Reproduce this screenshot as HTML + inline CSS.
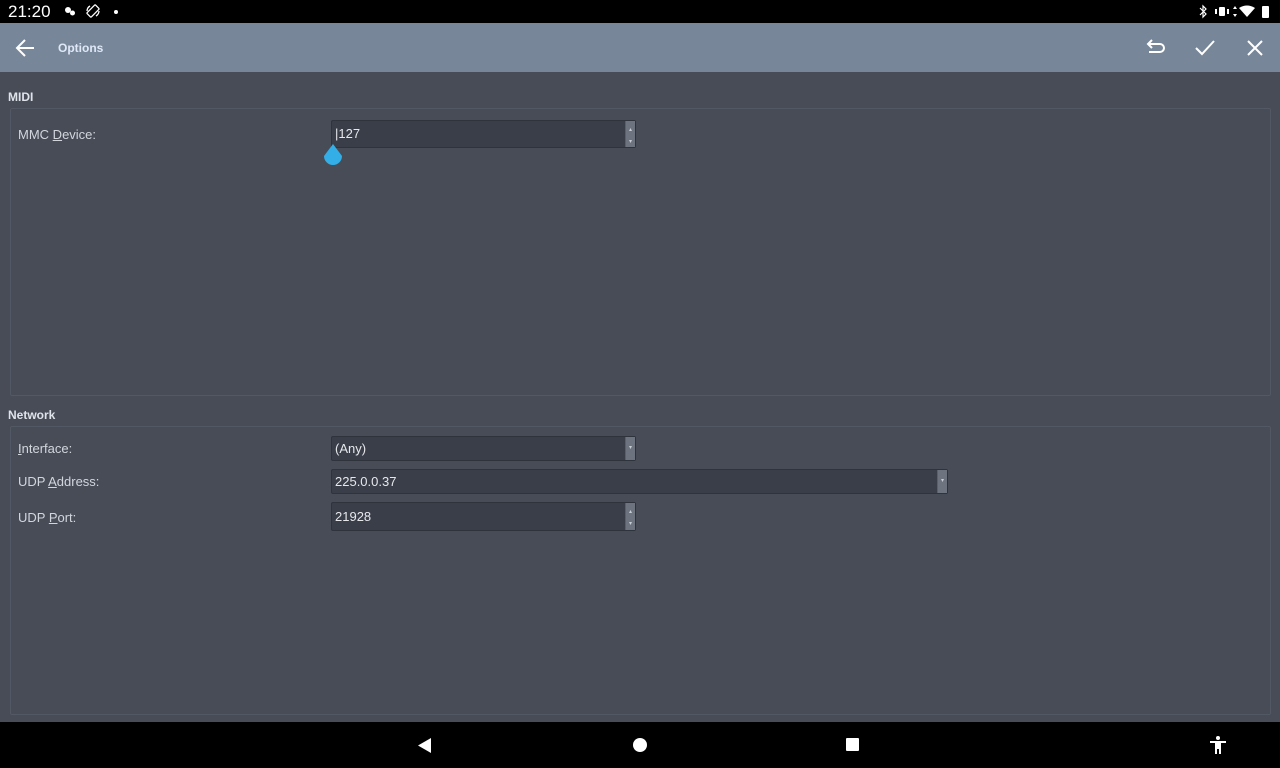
<!DOCTYPE html>
<html><head><meta charset="utf-8"><style>
*{box-sizing:border-box;margin:0;padding:0}
body{width:1280px;height:768px;overflow:hidden;background:#484c57;font-family:"Liberation Sans",sans-serif;position:relative;color:#d4d8de}
.status{position:absolute;left:0;top:0;width:1280px;height:23px;background:#000;color:#fff}
.tb{position:absolute;left:0;top:23px;width:1280px;height:49px;background:#778799}
.nav{position:absolute;left:0;top:722px;width:1280px;height:46px;background:#000}
.lbl{position:absolute;font-size:13px;color:#d2d6dc}
.hdr{position:absolute;font-size:12px;font-weight:bold;color:#dfe3ea}
.box{position:absolute;border:1px solid #535865;border-radius:2px}
.fld{position:absolute;background:#3a3e48;border:1px solid #2f333c;border-radius:2px;font-size:13px;color:#e6e8ec;padding-left:3px;line-height:24px}
.sb{position:absolute;right:0;top:0;bottom:0;width:10px;background:#6e7380;border-left:1px solid #5a5f6b;color:#c8ccd3;font-size:6px;line-height:6px;text-align:center}
u{text-decoration:underline}
</style></head><body>
<div class="status">
<div style="position:absolute;left:8px;top:2px;font-size:17px">21:20</div>
<svg style="position:absolute;left:64px;top:5px" width="12" height="12" viewBox="0 0 12 12"><circle cx="4" cy="5" r="3" fill="#fff"/><circle cx="8.5" cy="8" r="2.5" fill="#fff"/></svg>
<svg style="position:absolute;left:86px;top:4px" width="14" height="14" viewBox="0 0 14 14" fill="none" stroke="#fff" stroke-width="1.3"><rect x="4" y="1" width="6" height="12" rx="1" transform="rotate(45 7 7)"/><path d="M1 7a6 6 0 0 1 3-5M13 7a6 6 0 0 1-3 5"/></svg>
<div style="position:absolute;left:114px;top:10px;width:4px;height:4px;border-radius:2px;background:#fff"></div>
<svg style="position:absolute;left:1198px;top:4px" width="80" height="15" viewBox="0 0 80 15" fill="#fff" stroke="#fff"><path d="M2 4l6 6-3 3V2l3 3-6 6" fill="none" stroke-width="1.2"/><rect x="21" y="3" width="6" height="9" rx="1" stroke="none"/><rect x="17" y="5" width="2" height="5" stroke="none"/><rect x="29" y="5" width="2" height="5" stroke="none"/><path d="M37 2l2 3h-4zM37 13l2-3h-4z" stroke="none"/><path d="M41 4q8-5 16 0l-8 9z" stroke="none"/><rect x="64" y="2" width="7" height="12" rx="1" stroke="none"/></svg>
</div>
<div class="tb">
<svg style="position:absolute;left:14px;top:15px" width="22" height="20" viewBox="0 0 22 20" fill="none" stroke="#fff" stroke-width="2"><path d="M20 10H3M11 2L3 10l8 8"/></svg>
<div style="position:absolute;left:58px;top:18px;font-size:12px;font-weight:bold;color:#dfe8f7">Options</div>
<svg style="position:absolute;left:1145px;top:15px" width="22" height="20" viewBox="0 0 22 20" fill="none" stroke="#fff" stroke-width="2"><path d="M3 6h12a4 4 0 0 1 0 8H4M7 2L3 6l4 4"/></svg>
<svg style="position:absolute;left:1194px;top:15px" width="22" height="20" viewBox="0 0 22 20" fill="none" stroke="#fff" stroke-width="2"><path d="M2 10l6 6L20 3"/></svg>
<svg style="position:absolute;left:1246px;top:16px" width="18" height="18" viewBox="0 0 18 18" fill="none" stroke="#fff" stroke-width="2"><path d="M2 2l14 14M16 2L2 16"/></svg>
</div>
<div class="hdr" style="left:8px;top:90px">MIDI</div>
<div class="box" style="left:10px;top:108px;width:1261px;height:288px"></div>
<div class="lbl" style="left:18px;top:127px">MMC <u>D</u>evice:</div>
<div class="fld" style="left:331px;top:120px;width:305px;height:28px;line-height:26px">|127<div class="sb"><br>▴<br><br>▾</div></div>
<svg style="position:absolute;left:322px;top:144px" width="22" height="26" viewBox="0 0 22 26"><path d="M11 2L2 14a9 9 0 1 0 18 0z" fill="#33aee6" transform="translate(0 -2)"/></svg>
<div class="hdr" style="left:8px;top:408px">Network</div>
<div class="box" style="left:10px;top:426px;width:1261px;height:289px"></div>
<div class="lbl" style="left:18px;top:441px"><u>I</u>nterface:</div>
<div class="fld" style="left:331px;top:436px;width:305px;height:25px;line-height:23px">(Any)<div class="sb" style="line-height:23px">▾</div></div>
<div class="lbl" style="left:18px;top:474px">UDP <u>A</u>ddress:</div>
<div class="fld" style="left:331px;top:469px;width:617px;height:25px;line-height:23px">225.0.0.37<div class="sb" style="line-height:23px">▾</div></div>
<div class="lbl" style="left:18px;top:510px">UDP <u>P</u>ort:</div>
<div class="fld" style="left:331px;top:502px;width:305px;height:29px;line-height:28px">21928<div class="sb"><br>▴<br><br>▾</div></div>
<div class="nav">
<svg style="position:absolute;left:418px;top:16px" width="14" height="15"><path d="M13 0v15L0 7.5z" fill="#fff"/></svg>
<div style="position:absolute;left:633px;top:16px;width:14px;height:14px;border-radius:7px;background:#fff"></div>
<div style="position:absolute;left:846px;top:16px;width:13px;height:13px;border-radius:1px;background:#fff"></div>
<svg style="position:absolute;left:1209px;top:13px" width="18" height="20" viewBox="0 0 18 20" fill="#fff"><circle cx="9" cy="3" r="2"/><path d="M1 6h16v2h-5v11h-2v-5H8v5H6V8H1z"/></svg>
</div>
</body></html>
